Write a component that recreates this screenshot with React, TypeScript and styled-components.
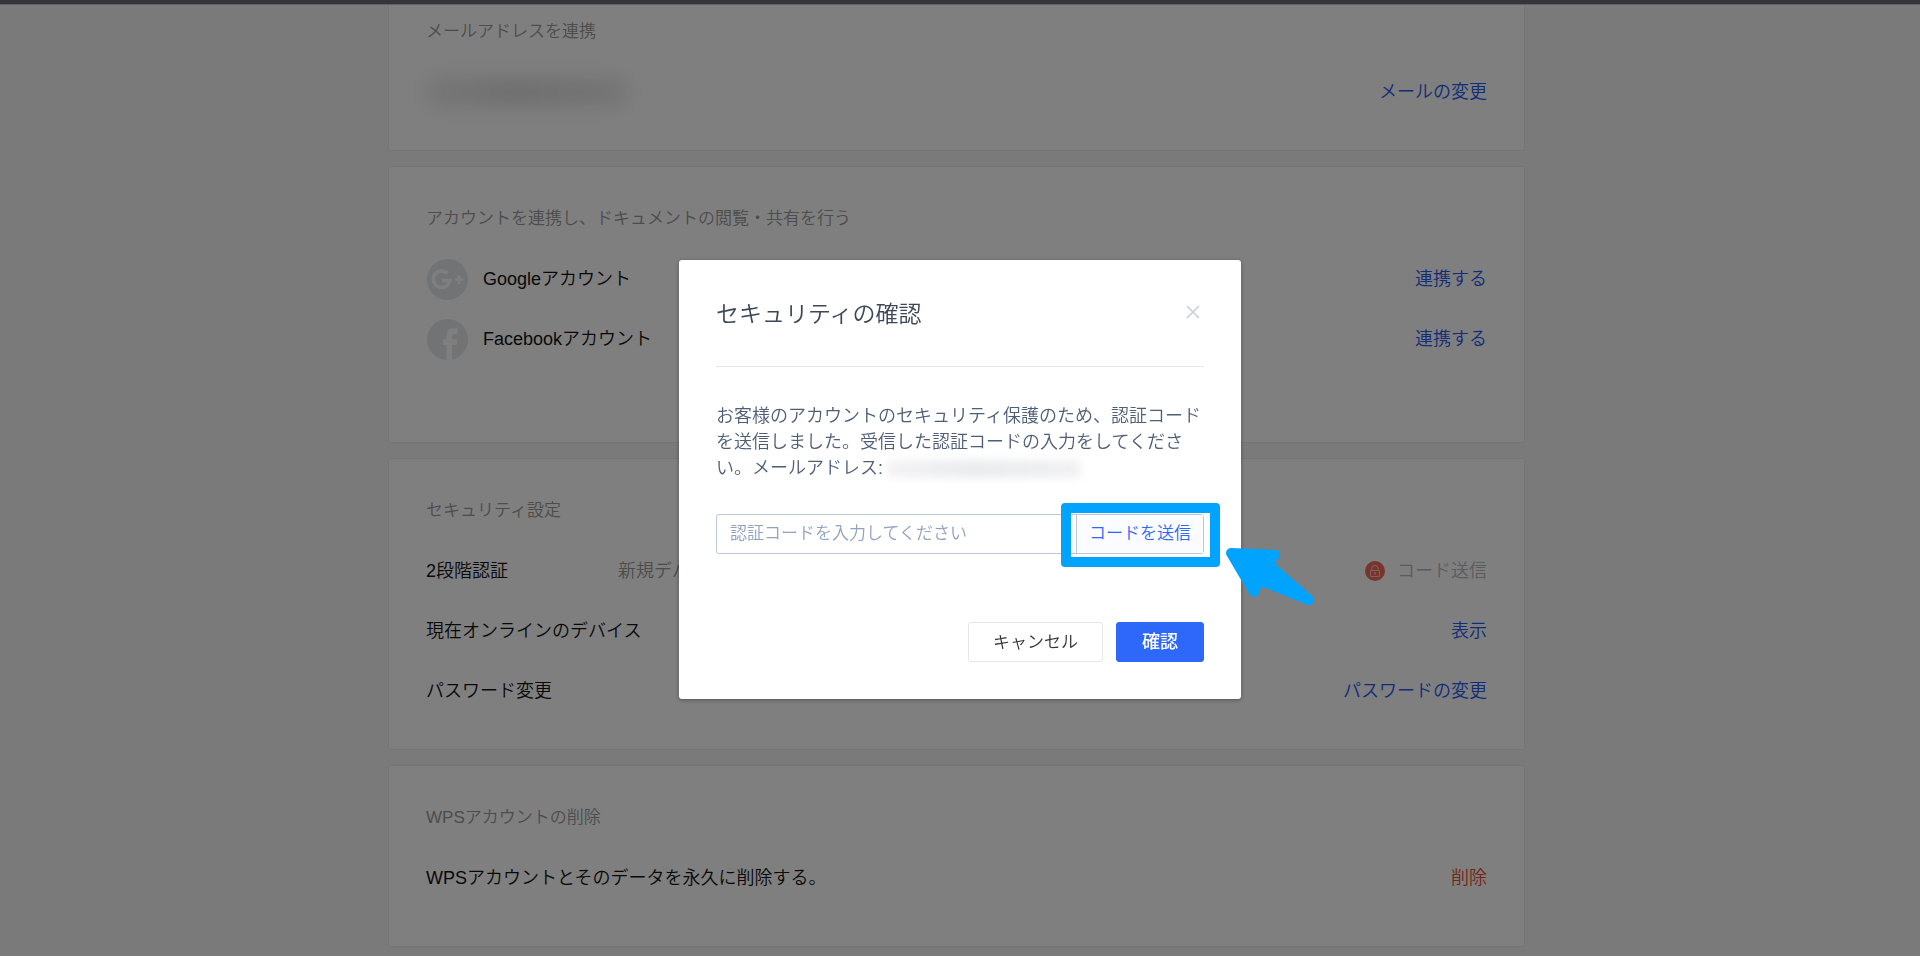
import React from "react";
import styled, { createGlobalStyle } from "styled-components";

const GlobalStyle = createGlobalStyle`
  * { box-sizing: border-box; }
  body {
    margin: 0;
    background: #f5f5f5;
    font-family: "Liberation Sans", "Noto Sans CJK JP", sans-serif;
    font-size: 18px;
    line-height: 26px;
    font-weight: 350;
    color: #111;
  }
  button, input { font-family: inherit; font-weight: inherit; }
  h1, h2, p { margin: 0; font-weight: inherit; }
  a { text-decoration: none; }
`;

const Page = styled.div`
  min-height: 100vh;
  overflow: hidden;
`;

const TopBar = styled.div`
  position: relative;
  z-index: 3;
  height: 5px;
  background: #34353b;
  border-bottom: 1px solid #606369;
`;

const Main = styled.main`
  display: flex;
  flex-direction: column;
  gap: 15px;
  max-width: 1137px;
  margin: 0 auto;
  padding-bottom: 9px;
`;

const Gutter = styled.div`
  padding-right: 7px;
`;

const Card = styled.section<{ $scrolled?: boolean; $bottom?: number }>`
  border: 1px solid #ebebeb;
  border-top-width: ${(p) => (p.$scrolled ? 0 : 1)}px;
  border-radius: ${(p) => (p.$scrolled ? "0 0 3px 3px" : "3px")};
  background: #fff;
  padding: ${(p) => (p.$scrolled ? 14 : 39)}px 37px ${(p) => p.$bottom ?? 28}px;
`;

const CardTitle = styled.h2`
  margin-bottom: 18px;
  font-size: 17px;
  line-height: 25px;
  color: #999;
`;

const Row = styled.div`
  display: flex;
  align-items: center;
  height: 60px;
`;

const RowLabel = styled.span<{ $wide?: boolean }>`
  min-width: ${(p) => (p.$wide ? 192 : 0)}px;
`;

const RowNote = styled.span`
  color: #999;
`;

const RowIcon = styled.svg`
  width: 41px;
  height: 41px;
  margin: 0 15px 0 1px;
`;

const Action = styled.a<{ $tone?: "danger" | "muted" }>`
  margin-left: auto;
  display: flex;
  align-items: center;
  gap: 12px;
  color: ${(p) => (p.$tone === "danger" ? "#e84a34" : p.$tone === "muted" ? "#b4b7be" : "#2458f0")};
`;

const MaskedMail = styled.span<{ $small?: boolean }>`
  display: inline-block;
  vertical-align: middle;
  width: ${(p) => (p.$small ? 192 : 200)}px;
  height: ${(p) => (p.$small ? 18 : 28)}px;
  background: ${(p) =>
    p.$small
      ? "linear-gradient(90deg, #f3f3f5, #ebecee 45%, #f1f1f3)"
      : "linear-gradient(90deg, #ececec, #dcdcdc 45%, #e8e8e8)"};
  filter: blur(${(p) => (p.$small ? 4 : 10)}px);
`;

const Overlay = styled.div`
  position: fixed;
  inset: 0;
  z-index: 2;
  display: flex;
  align-items: center;
  justify-content: center;
  padding-top: 3px;
  background: rgba(0, 0, 0, 0.5);
`;

const Dialog = styled.div`
  width: 562px;
  padding: 38px 37px 37px;
  border-radius: 3px;
  background: #fff;
  box-shadow: 0 1px 4px rgba(0, 0, 0, 0.35);
`;

const DialogHead = styled.div`
  display: flex;
  align-items: flex-start;
  justify-content: space-between;
  height: 69px;
  border-bottom: 1px solid #e6e7e9;
`;

const DialogTitle = styled.h1`
  font-size: 23px;
  line-height: 32px;
  color: #3d4757;
`;

const CloseButton = styled.button`
  display: flex;
  margin: 7px 4px 0 0;
  padding: 0;
  border: 0;
  background: none;
`;

const Message = styled.p`
  padding-top: 36px;
  color: #4e5d78;
`;

const CodeField = styled.form`
  display: flex;
  height: 40px;
  margin-top: 33px;
  border: 1px solid #b9c7d8;
  border-radius: 3px;
`;

const CodeInput = styled.input`
  flex: 1;
  min-width: 0;
  padding: 0 13px;
  border: 0;
  background: none;
  font-size: 17px;
  outline: none;
  &::placeholder { color: #8fa2be; opacity: 1; }
`;

const SendWrap = styled.div`
  position: relative;
  display: flex;
`;

const SendButton = styled.button`
  width: 127px;
  padding: 0 0 5px;
  border: 0;
  border-left: 1px solid #b9c7d8;
  background: #fafcff;
  font-size: 17px;
  color: #2f66fb;
`;

const Highlight = styled.div`
  position: absolute;
  top: -12px;
  right: -17px;
  width: 159px;
  height: 64px;
  border: 10px solid #00a4ff;
  border-radius: 4px;
`;

const Pointer = styled.svg`
  position: absolute;
  top: 32px;
  left: 149px;
  width: 92px;
  height: 60px;
`;

const Buttons = styled.div`
  display: flex;
  justify-content: flex-end;
  gap: 13px;
  margin-top: 68px;
`;

const DialogButton = styled.button<{ $primary?: boolean }>`
  height: 40px;
  width: ${(p) => (p.$primary ? 88 : 135)}px;
  padding: 0 0 4px;
  border: 1px solid ${(p) => (p.$primary ? "#2e68fb" : "#e6e6e8")};
  border-radius: 3px;
  background: ${(p) => (p.$primary ? "#2e68fb" : "#fff")};
  color: ${(p) => (p.$primary ? "#fff" : "#333")};
  font-size: ${(p) => (p.$primary ? 18 : 17)}px;
  font-weight: ${(p) => (p.$primary ? 500 : "inherit")};
`;

const GooglePlusIcon = () => (
  <RowIcon viewBox="0 0 41 41" aria-hidden="true">
    <circle cx="20.5" cy="20.5" r="20.5" fill="#e3e6eb" />
    <path d="M20.500 14.600a8.200 8.200 0 1 0 2.100 6.900h-7.600" fill="none" stroke="#fff" strokeWidth="3.600" />
    <path d="M32 16.300v8.400M27.800 20.500h8.400" stroke="#fff" strokeWidth="2.600" />
  </RowIcon>
);

const FacebookIcon = () => (
  <RowIcon viewBox="0 0 41 41" aria-hidden="true">
    <circle cx="20.5" cy="20.5" r="20.5" fill="#e3e6eb" />
    <path d="M19.500 41V26H16v-5.500h3.500V17c0-5 2.500-7.700 7-7.700h4V15h-2.500c-2.200 0-3 .8-3 2.600v2.900h5.300L29.600 26H25v15z" fill="#fff" />
  </RowIcon>
);

const LockIcon = () => (
  <svg width="20" height="20" viewBox="0 0 20 20" aria-hidden="true">
    <circle cx="10" cy="10" r="10" fill="#ee6a58" />
    <g fill="none" stroke="#fff" strokeOpacity="0.6">
      <rect x="5.500" y="9.500" width="9" height="6" rx="0.500" />
      <path d="M6.800 9.500V7.500a3.200 3.200 0 0 1 6.400 0v2" />
      <path d="M10 11v2.500" strokeWidth="1.500" />
    </g>
  </svg>
);

export default function App() {
  return (
    <Page>
      <GlobalStyle />
      <TopBar />
      <Gutter>
        <Main>
          <Card $scrolled>
            <CardTitle>メールアドレスを連携</CardTitle>
            <Row>
              <MaskedMail />
              <Action href="#">メールの変更</Action>
            </Row>
          </Card>
          <Card $bottom={73}>
            <CardTitle>アカウントを連携し、ドキュメントの閲覧・共有を行う</CardTitle>
            <Row>
              <GooglePlusIcon />
              <RowLabel>Googleアカウント</RowLabel>
              <Action href="#">連携する</Action>
            </Row>
            <Row>
              <FacebookIcon />
              <RowLabel>Facebookアカウント</RowLabel>
              <Action href="#">連携する</Action>
            </Row>
          </Card>
          <Card>
            <CardTitle>セキュリティ設定</CardTitle>
            <Row>
              <RowLabel $wide>2段階認証</RowLabel>
              <RowNote>新規デバイス</RowNote>
              <Action href="#" $tone="muted">
                <LockIcon />
                コード送信
              </Action>
            </Row>
            <Row>
              <RowLabel>現在オンラインのデバイス</RowLabel>
              <Action href="#">表示</Action>
            </Row>
            <Row>
              <RowLabel>パスワード変更</RowLabel>
              <Action href="#">パスワードの変更</Action>
            </Row>
          </Card>
          <Card $bottom={38}>
            <CardTitle>WPSアカウントの削除</CardTitle>
            <Row>
              <RowLabel>WPSアカウントとそのデータを永久に削除する。</RowLabel>
              <Action href="#" $tone="danger">削除</Action>
            </Row>
          </Card>
        </Main>
      </Gutter>
      <Overlay>
        <Dialog role="dialog" aria-labelledby="dialog-title">
          <DialogHead>
            <DialogTitle id="dialog-title">セキュリティの確認</DialogTitle>
            <CloseButton type="button" aria-label="閉じる">
              <svg width="14" height="14" viewBox="0 0 14 14" aria-hidden="true">
                <path d="M1 1l12 12M13 1L1 13" stroke="#c0cee0" strokeWidth="1.500" />
              </svg>
            </CloseButton>
          </DialogHead>
          <Message>
            お客様のアカウントのセキュリティ保護のため、認証コードを送信しました。受信した認証コードの入力をしてください。メールアドレス: <MaskedMail $small />
          </Message>
          <CodeField onSubmit={(e) => e.preventDefault()}>
            <CodeInput aria-label="認証コード" placeholder="認証コードを入力してください" />
            <SendWrap>
              <SendButton type="button">コードを送信</SendButton>
              <Highlight />
              <Pointer viewBox="0 0 92 60" aria-hidden="true">
                <path d="M6 6L50 8L43 17L84 53L34 33L29 45Z" fill="#00a4ff" stroke="#00a4ff" strokeWidth="10" strokeLinejoin="round" />
              </Pointer>
            </SendWrap>
          </CodeField>
          <Buttons>
            <DialogButton type="button">キャンセル</DialogButton>
            <DialogButton type="button" $primary>確認</DialogButton>
          </Buttons>
        </Dialog>
      </Overlay>
    </Page>
  );
}
